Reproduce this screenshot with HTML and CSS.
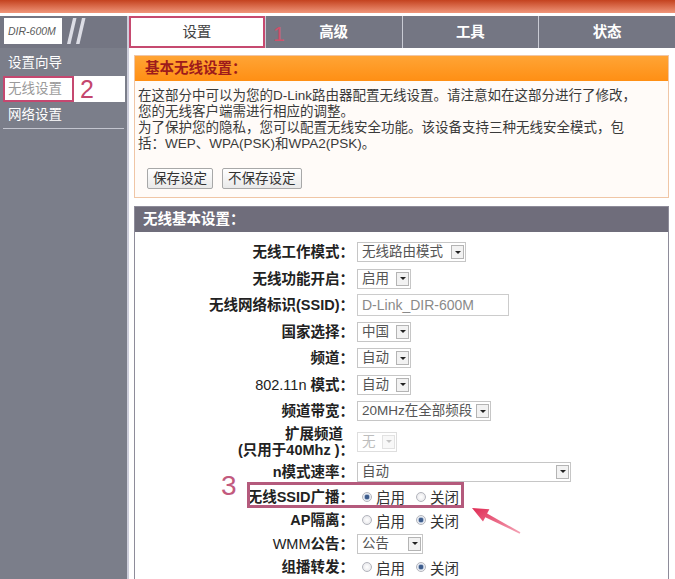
FILE: index.html
```html
<!DOCTYPE html>
<html lang="zh-CN">
<head>
    <meta charset="UTF-8">
    <meta name="viewport" content="width=device-width, initial-scale=1.0">
    <title>DIR-600M 无线设置</title>
    <link rel="stylesheet" href="styles.css">
</head>

<body>
    <div class="page">
        <div class="top-band"></div>

        <!-- horní menu -->
        <div class="nav">
            <div class="brand">
                <span class="logo">DIR-600M</span>
                <svg class="slashes" width="24" height="26" viewBox="0 0 24 26">
                    <polygon points="1,26 4.5,26 10.5,0 7,0" fill="#dcdde5"/>
                    <polygon points="10,26 13.5,26 19.5,0 16,0" fill="#dcdde5"/>
                </svg>
            </div>
            <ul class="tabs">
                <li class="tab active">设置</li>
                <li class="tab">高级</li>
                <li class="tab">工具</li>
                <li class="tab">状态</li>
            </ul>
        </div>

        <div class="layout">
            <!-- levé menu -->
            <aside class="side">
                <a class="side-item">设置向导</a>
                <a class="side-item active"><span class="mark-box">无线设置</span><span class="step-2">2</span></a>
                <a class="side-item last">网络设置</a>
            </aside>

            <main class="main">
                <div class="panel">
                    <div class="panel-head">基本无线设置：</div>
                    <div class="panel-body">
                        <p class="intro">在这部分中可以为您的D-Link路由器配置无线设置。请注意如在这部分进行了修改，<br>您的无线客户端需进行相应的调整。<br>为了保护您的隐私，您可以配置无线安全功能。该设备支持三种无线安全模式，包<br>括：WEP、WPA(PSK)和WPA2(PSK)。</p>
                        <div class="buttons">
                            <button class="btn">保存设定</button>
                            <button class="btn">不保存设定</button>
                        </div>
                    </div>
                </div>

                <div class="group">
                    <div class="group-head">无线基本设置：</div>
                    <div class="form">
                        <div class="row">
                            <span class="lbl">无线工作模式：</span>
                            <span class="sel w-mode">无线路由模式<i class="arr"></i></span>
                        </div>
                        <div class="row">
                            <span class="lbl">无线功能开启：</span>
                            <span class="sel w-short">启用<i class="arr"></i></span>
                        </div>
                        <div class="row">
                            <span class="lbl">无线网络标识(SSID)：</span>
                            <span class="txt">D-Link_DIR-600M</span>
                        </div>
                        <div class="row">
                            <span class="lbl">国家选择：</span>
                            <span class="sel w-short">中国<i class="arr"></i></span>
                        </div>
                        <div class="row">
                            <span class="lbl">频道：</span>
                            <span class="sel w-short">自动<i class="arr"></i></span>
                        </div>
                        <div class="row">
                            <span class="lbl"><span class="thin">802.11n</span> 模式：</span>
                            <span class="sel w-short">自动<i class="arr"></i></span>
                        </div>
                        <div class="row">
                            <span class="lbl">频道带宽：</span>
                            <span class="sel w-band">20MHz在全部频段<i class="arr"></i></span>
                        </div>
                        <div class="row tall">
                            <span class="lbl"><span class="first-line">扩展频道</span><br>(只用于40Mhz )：</span>
                            <span class="sel w-ext off">无<i class="arr"></i></span>
                        </div>
                        <div class="row">
                            <span class="lbl">n模式速率：</span>
                            <span class="sel w-rate">自动<i class="arr"></i></span>
                        </div>
                        <div class="row small">
                            <span class="mark"></span>
                            <span class="lbl">无线SSID广播：</span>
                            <span class="radio"><i class="dot on"></i>启用</span>
                            <span class="radio"><i class="dot"></i>关闭</span>
                        </div>
                        <div class="row small">
                            <span class="lbl">AP隔离：</span>
                            <span class="radio"><i class="dot"></i>启用</span>
                            <span class="radio"><i class="dot on"></i>关闭</span>
                        </div>
                        <div class="row small">
                            <span class="lbl"><span class="thin">WMM</span>公告：</span>
                            <span class="sel w-wmm">公告<i class="arr"></i></span>
                        </div>
                        <div class="row small">
                            <span class="lbl">组播转发：</span>
                            <span class="radio"><i class="dot"></i>启用</span>
                            <span class="radio"><i class="dot on"></i>关闭</span>
                        </div>
                    </div>
                </div>
            </main>
        </div>

        <!-- značky z návodu -->
        <span class="step step-1">1</span>
        <span class="step step-3">3</span>
        <svg class="pointer" width="64" height="40" viewBox="0 0 64 40">
            <defs>
                <linearGradient id="shaft" x1="0" y1="0" x2="1" y2="1">
                    <stop offset="0" stop-color="#e02c55"/>
                    <stop offset="1" stop-color="#f4a4b6"/>
                </linearGradient>
            </defs>
            <polygon points="12,10 29.4,11.2 27.1,15.6 60.4,34.3 59.6,35.7 25.3,19.2 23,23.6" fill="url(#shaft)"/>
        </svg>
    </div>
</body>
</html>
```

FILE: styles.css
```css
/* základ */
body {
    margin: 0;
    font-family: "Liberation Sans", "Noto Sans CJK SC", sans-serif;
    color: #333;
    background-color: #fff;
}

.page {
    position: relative;
    width: 675px;
    overflow: hidden;
}

.top-band {
    height: 13px;
    background: linear-gradient(#c4421f, #f0967a);
}

/* horní menu */
.nav {
    display: flex;
    height: 32px;
    margin-top: 3px;
    background-color: #747683;
}

.brand {
    display: flex;
    align-items: flex-start;
    width: 129px;
    padding-left: 4px;
    box-sizing: border-box;
    border-right: 2px solid #cdcedb;
}

.logo {
    width: 58px;
    height: 26px;
    margin-top: 2px;
    padding-left: 4px;
    box-sizing: border-box;
    background-color: #fff;
    color: #5a5a5a;
    font-size: 10.5px;
    font-style: italic;
    line-height: 26px;
    white-space: nowrap;
}

.slashes {
    margin-top: 2px;
    margin-left: 4px;
}

.tabs {
    display: flex;
    flex: 1;
    margin: 0;
    padding: 0;
    list-style: none;
}

.tab {
    flex: 1;
    text-align: center;
    line-height: 32px;
    color: #fff;
    font-size: 14.5px;
    font-weight: bold;
}

.tab + .tab {
    border-left: 1px solid #c9cbd4;
}

.tab.active {
    background-color: #fff;
    color: #444;
    font-weight: normal;
    box-shadow: inset 0 0 0 2px #c64a70;
}

/* levé menu */
.layout {
    display: flex;
    min-height: 531px;
}

.side {
    flex: none;
    width: 129px;
    padding-top: 2px;
    box-sizing: border-box;
    border-right: 2px solid #cdcedb;
    background-color: #7b7e8a;
}

.side-item {
    display: block;
    height: 26px;
    padding-left: 8px;
    color: #fff;
    font-size: 13.5px;
    line-height: 26px;
}

.side-item.active {
    display: flex;
    align-items: center;
    margin: 0 2px 0 3px;
    padding-left: 0;
    background-color: #fff;
}

.mark-box {
    height: 26px;
    padding: 0 10px 0 3px;
    box-sizing: border-box;
    border: 2px solid #c54870;
    color: #9a9a9a;
    line-height: 22px;
}

.step-2 {
    margin-left: 6px;
    color: #c4466e;
    font-size: 25px;
    line-height: 26px;
}

.side-item.last {
    margin: 0 3px;
    padding-left: 5px;
    border-bottom: 1px solid #c3c5cf;
}

/* obsah */
.main {
    flex: 1;
    padding: 7px 6px 0 5px;
}

.panel {
    border: 1px solid #f0c6a6;
    background-color: #fffbf8;
}

.panel-head {
    height: 25px;
    padding-left: 10px;
    background: linear-gradient(#ffa435, #ff8f14);
    color: #9e1b1b;
    font-size: 14.5px;
    font-weight: bold;
    line-height: 25px;
}

.panel-body {
    padding: 7px 3px 8px;
}

.intro {
    margin: 0;
    color: #3a3a3a;
    font-size: 13.5px;
    line-height: 16px;
    white-space: nowrap;
}

.buttons {
    display: flex;
    gap: 9px;
    margin-top: 16px;
    padding-left: 9px;
}

.btn {
    height: 21px;
    padding: 0 5px;
    border: 1px solid #a8a8a8;
    border-radius: 2px;
    background: linear-gradient(#ffffff, #e9e9e9);
    color: #333;
    font-family: inherit;
    font-size: 13.5px;
    line-height: 19px;
}

.group {
    margin-top: 8px;
    border: 1px solid #8e8c9a;
    background-color: #fff;
}

.group-head {
    height: 25px;
    padding-left: 8px;
    background-color: #6f6d7b;
    color: #fff;
    font-size: 14.5px;
    font-weight: bold;
    line-height: 25px;
}

.form {
    padding: 7px 0 12px;
}

.row {
    position: relative;
    display: flex;
    align-items: center;
    height: 26.5px;
    font-size: 14.5px;
}

.row.tall {
    height: 34px;
}

.row.small {
    height: 23.5px;
}

.lbl {
    flex: none;
    width: 219px;
    margin-right: 3px;
    text-align: right;
    color: #222;
    font-weight: bold;
    line-height: 16px;
}

.lbl .thin {
    font-weight: normal;
}

.first-line {
    margin-right: 11px;
}

/* rozbalovací seznamy */
.sel {
    display: inline-flex;
    align-items: center;
    justify-content: space-between;
    height: 20px;
    padding: 0 1px 0 4px;
    box-sizing: border-box;
    border: 1px solid #c6c6c6;
    color: #555;
    font-size: 13.5px;
    line-height: 18px;
    white-space: nowrap;
}

.arr {
    flex: none;
    display: flex;
    align-items: center;
    justify-content: center;
    width: 13px;
    height: 14px;
    box-sizing: border-box;
    border: 1px solid #b4b4b4;
    background-color: #f2f2f2;
}

.arr::after {
    content: "";
    border-left: 3px solid transparent;
    border-right: 3px solid transparent;
    border-top: 3px solid #222;
}

.sel.off {
    border-color: #dedede;
    color: #bdbdbd;
}

.sel.off .arr {
    border-color: #e2e2e2;
    background-color: #f8f8f8;
}

.sel.off .arr::after {
    border-top-color: #c4c4c4;
}

.w-mode { width: 109px; }
.w-short { width: 54px; }
.w-band { width: 134px; }
.w-ext { width: 40px; }
.w-rate { width: 214px; }
.w-wmm { width: 66px; }

.txt {
    width: 152px;
    height: 22px;
    padding-left: 4px;
    box-sizing: border-box;
    border: 1px solid #cccccc;
    color: #8a8a8a;
    font-size: 14px;
    line-height: 20px;
}

/* přepínače */
.radio {
    display: inline-flex;
    align-items: center;
    gap: 4px;
    margin-left: 5px;
    margin-right: 6px;
    color: #333;
}

.dot {
    width: 10px;
    height: 10px;
    box-sizing: border-box;
    border: 1px solid #b2b4bc;
    border-radius: 50%;
    background: radial-gradient(circle, #ffffff, #e2e2e6);
}

.dot.on {
    background: radial-gradient(circle, #3d5c8c 0, #3d5c8c 2px, #b9c7dc 2.6px, #eef0f4 3.6px);
}

.mark {
    position: absolute;
    left: 112px;
    top: -3px;
    width: 217px;
    height: 26px;
    box-sizing: border-box;
    border: 3px solid #b45a7c;
}

/* značky */
.step {
    position: absolute;
    font-family: "Liberation Sans", sans-serif;
    line-height: 1;
}

.step-1 {
    left: 273px;
    top: 23px;
    color: #d0506a;
    font-size: 21px;
}

.step-3 {
    left: 221px;
    top: 472px;
    color: #c25a7e;
    font-size: 28px;
}

.pointer {
    position: absolute;
    left: 460px;
    top: 498px;
}
```
